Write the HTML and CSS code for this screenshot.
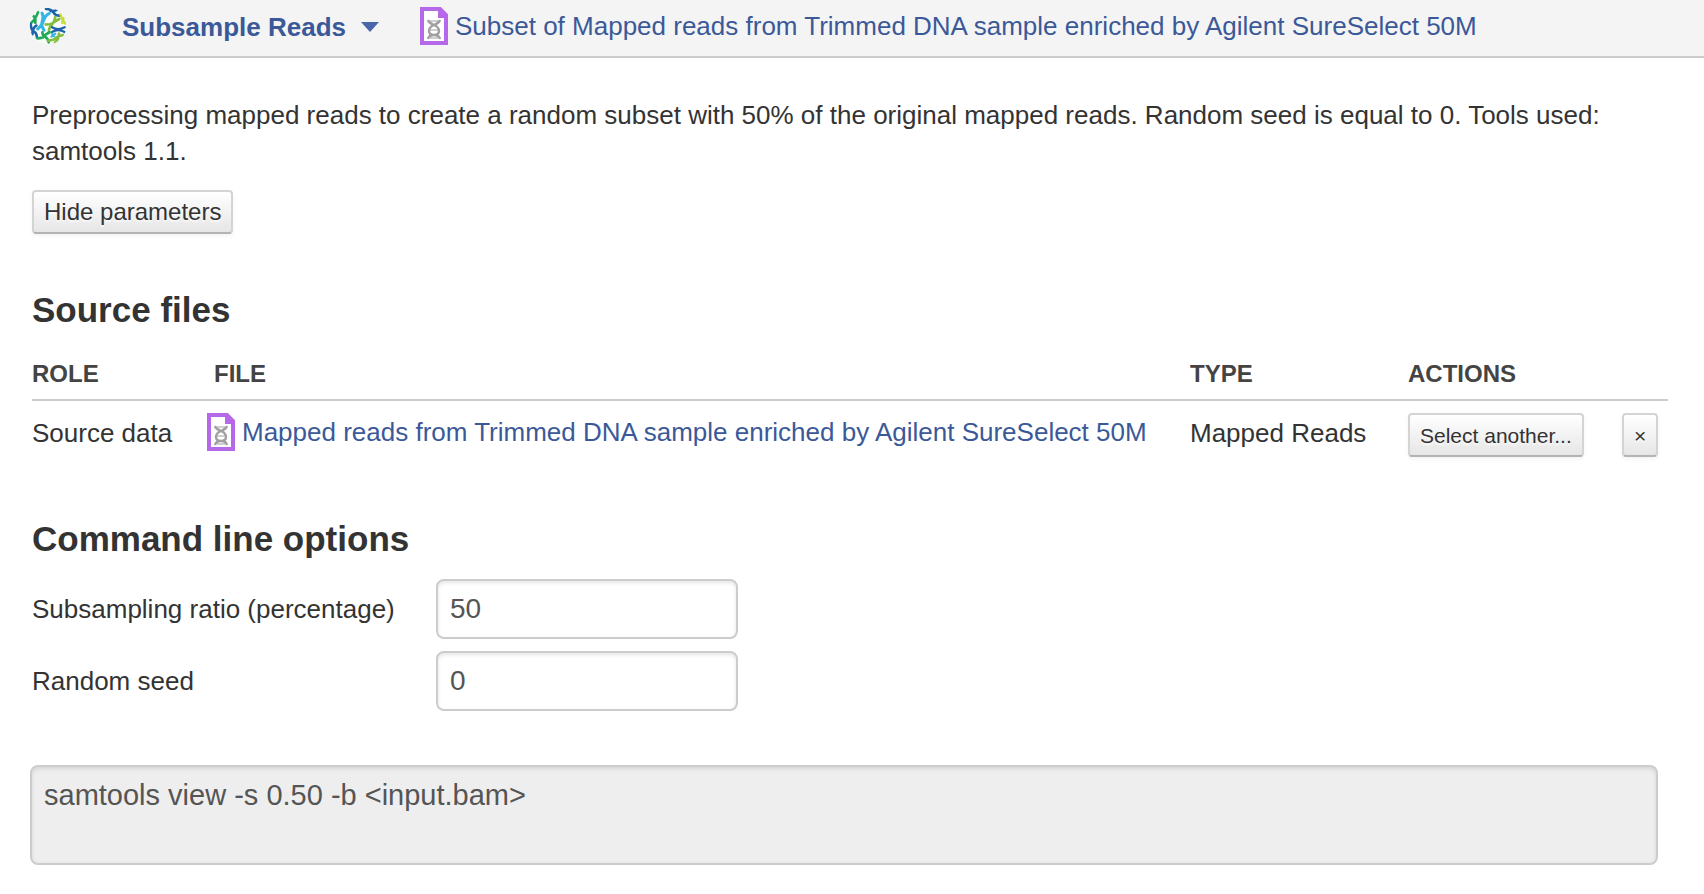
FILE: index.html
```html
<!DOCTYPE html>
<html lang="en">
<head>
<meta charset="utf-8">
<title>Subsample Reads</title>
<link rel="stylesheet" href="styles.css">
</head>
<body>
<svg class="defs" aria-hidden="true">
  <symbol id="file-dna" viewBox="0 0 28 38">
    <path d="M2 2H20L26 8V36H2Z" fill="#fff" stroke="#b569e8" stroke-width="4"/>
    <path d="M18 1H21L28 8V11H18Z" fill="#b569e8"/>
    <g fill="none" stroke="#a0a0a0" stroke-width="2.400">
      <path d="M8 13Q9 16 14 18T19 24T14 28T8 32M20 13Q19 16 14 18T9 24T14 28T20 32"/>
      <path d="M10 14H18M10 23H18M10 31H18" stroke-width="1.200"/>
    </g>
  </symbol>
</svg>
<header class="topbar">
  <svg class="logo" viewBox="3 6 114 114" aria-hidden="true">
    <defs><clipPath id="disc"><circle cx="60" cy="63" r="55"/></clipPath></defs>
    <circle cx="60" cy="63" r="54" fill="#fafcf8"/>
    <g clip-path="url(#disc)" fill="none" stroke-width="8" stroke-linecap="round">
      <path d="M9 54Q22 44 30 22M15 32Q24 38 22 54" stroke="#21a95b"/>
      <path d="M42 24Q48 36 43 48T48 76M64 25Q52 30 47 46T29 72" stroke="#35b4e5" stroke-width="9"/>
      <path d="M54 12Q70 12 76 22T94 32M68 18Q80 20 92 12" stroke="#1d62ab"/>
      <path d="M53 58Q66 60 74 54T94 42M82 36Q80 50 71 60T63 78" stroke="#84bd42"/>
      <path d="M97 28Q100 42 112 56M112 36Q102 42 103 54" stroke="#c5dc3c" stroke-width="7"/>
      <path d="M72 67Q90 78 110 67M72 81Q90 70 110 81" stroke="#1d62ab" stroke-width="7"/>
      <path d="M8 58Q10 76 18 80T27 98M25 62Q14 68 13 88" stroke="#1d62ab"/>
      <path d="M28 100Q44 100 48 94T65 82M43 82Q44 92 52 96T62 112" stroke="#21a95b"/>
      <path d="M70 95L82 86M72 86L78 94" stroke="#35b4e5" stroke-width="6"/>
      <path d="M60 107Q78 106 82 100T106 90M80 114Q92 104 93 86" stroke="#84bd42"/>
    </g>
  </svg>
  <button class="app-menu" type="button">Subsample Reads
    <svg class="caret" viewBox="0 0 18 10" aria-hidden="true"><path d="M0 0H18L9 10Z" fill="#4866a8"/></svg>
  </button>
  <a class="file-link" href="#"><svg class="file-icon" aria-hidden="true"><use href="#file-dna"/></svg>Subset of Mapped reads from Trimmed DNA sample enriched by Agilent SureSelect 50M</a>
</header>
<main class="content">
  <p class="description">Preprocessing mapped reads to create a random subset with 50% of the original mapped reads. Random seed is equal to 0. Tools used: samtools 1.1.</p>
  <button class="btn" type="button">Hide parameters</button>

  <h2>Source files</h2>
  <table class="sources">
    <colgroup><col class="col-role"><col><col class="col-type"><col class="col-select"><col class="col-remove"></colgroup>
    <thead>
      <tr><th>ROLE</th><th>FILE</th><th>TYPE</th><th colspan="2">ACTIONS</th></tr>
    </thead>
    <tbody>
      <tr>
        <td>Source data</td>
        <td class="cell-control"><a class="file-link" href="#"><svg class="file-icon" aria-hidden="true"><use href="#file-dna"/></svg>Mapped reads from Trimmed DNA sample enriched by Agilent SureSelect 50M</a></td>
        <td>Mapped Reads</td>
        <td class="cell-control"><button class="btn btn-small" type="button">Select another...</button></td>
        <td class="cell-control"><button class="btn btn-small" type="button" aria-label="Remove">×</button></td>
      </tr>
    </tbody>
  </table>

  <h2>Command line options</h2>
  <form class="options">
    <label for="ratio">Subsampling ratio (percentage)</label>
    <input id="ratio" type="text" value="50">
    <label for="seed">Random seed</label>
    <input id="seed" type="text" value="0">
  </form>
  <textarea class="command" aria-label="Command line" readonly>samtools view -s 0.50 -b &lt;input.bam&gt;</textarea>
</main>
</body>
</html>
```
FILE: styles.css
```css
* { box-sizing: border-box; }

body {
  margin: 0;
  background: #fff;
  color: #333;
  font: 26px/36px "Liberation Sans", Arial, sans-serif;
}

.defs { position: absolute; width: 0; height: 0; }

.topbar {
  display: flex;
  align-items: center;
  height: 58px;
  padding: 0 29px 4px;
  background: #f4f4f4;
  border-bottom: 2px solid #ccc;
}

.logo { flex: none; width: 38px; height: 38px; }

.app-menu {
  display: flex;
  align-items: center;
  gap: 15px;
  margin: 0 41px 0 55px;
  padding: 2px 0 0;
  border: 0;
  background: none;
  color: #3b5998;
  font: inherit;
  font-weight: bold;
  white-space: nowrap;
}

.caret { width: 18px; height: 10px; }

.file-link {
  display: flex;
  align-items: center;
  gap: 7px;
  color: #3b5998;
  text-decoration: none;
  white-space: nowrap;
}

.file-icon { flex: none; width: 28px; height: 38px; }

.content { padding: 39px 36px 30px 32px; }

.description { margin: 0 0 21px; }

.btn {
  display: block;
  height: 44px;
  padding: 0 10px;
  border: 2px solid #d4d4d4;
  border-bottom-color: #b3b3b3;
  border-radius: 4px;
  background: linear-gradient(#fff, #e6e6e6);
  box-shadow: 0 2px 4px rgba(0, 0, 0, .05);
  color: #333;
  font: 24px/36px "Liberation Sans", Arial, sans-serif;
  text-shadow: 0 2px 2px rgba(255, 255, 255, .75);
  white-space: nowrap;
}

.btn-small {
  padding-top: 2px;
  font-size: 21px;
}

h2 {
  margin: 56px 0 20px;
  font-size: 35px;
  line-height: 40px;
}

.sources {
  width: 100%;
  margin-bottom: 62px;
  border-collapse: collapse;
  table-layout: fixed;
}

.col-role { width: 182px; }
.col-type { width: 218px; }
.col-select { width: 214px; }
.col-remove { width: 46px; }

.sources th {
  padding: 6px 0 7px;
  border-bottom: 2px solid #ccc;
  color: #444;
  font-size: 24px;
  text-align: left;
}

.sources td {
  padding: 14px 0 0;
  vertical-align: top;
}

.sources .cell-control { padding-top: 12px; }
.cell-control .file-link { margin-left: -7px; }

.options {
  display: grid;
  grid-template-columns: 404px 302px;
  gap: 12px 0;
  align-items: center;
}

.options input,
.command {
  border: 2px solid #ccc;
  border-radius: 8px;
  box-shadow: inset 0 2px 4px rgba(0, 0, 0, .1);
  color: #555;
  font: 28px/36px "Liberation Sans", Arial, sans-serif;
}

.options input {
  width: 100%;
  height: 60px;
  padding: 8px 12px;
  background: #fff;
}

.command {
  display: block;
  width: calc(100% - 8px);
  height: 100px;
  margin: 54px 0 0 -2px;
  padding: 10px 12px;
  background: #eee;
  font-size: 29px;
  resize: none;
}
```
